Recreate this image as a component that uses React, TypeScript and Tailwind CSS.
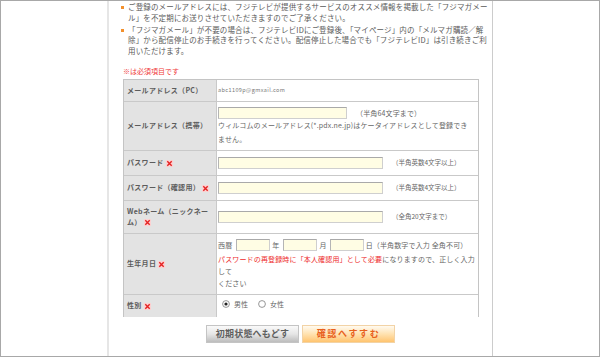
import React from 'react';

const Req = () => (
  <svg width="7" height="7" viewBox="0 0 7 7" className="inline-block ml-[2px] shrink-0">
    <rect width="7" height="7" fill="#fbd2d2" />
    <path d="M1.3 1.3L5.7 5.7M5.7 1.3L1.3 5.7" stroke="#e42222" strokeWidth="1.4" />
  </svg>
);

const Radio = ({ checked }: { checked?: boolean }) => (
  <svg width="8" height="8" viewBox="0 0 8 8" className="shrink-0">
    <circle cx="4" cy="4" r="3.4" fill="#fff" stroke="#8a8a8a" strokeWidth="0.9" />
    {checked && <circle cx="4" cy="4" r="1.6" fill="#222" />}
  </svg>
);

const Field = ({ className }: { className: string }) => (
  <input
    type="text"
    readOnly
    className={`h-[12px] bg-[#fffde4] border border-[#cfcfcf] border-t-[#a9a9a9] border-l-[#b5b5b5] outline-none ${className}`}
  />
);

interface RowProps {
  label: React.ReactNode;
  height: string;
  first?: boolean;
  children: React.ReactNode;
}

const Row = ({ label, height, first, children }: RowProps) => (
  <div className={`flex ${height} ${first ? '' : 'border-t border-[#c9c9c9]'}`}>
    <div className="w-[93px] shrink-0 bg-[#e3e3e3] border-r border-[#c9c9c9] flex items-center pl-[3px] text-[7px] leading-[11.5px] font-bold tracking-[0.3px] text-[#5c5c5c]">
      {label}
    </div>
    <div className="flex-1 pl-[1px] text-[7px] text-[#666]">{children}</div>
  </div>
);

export default function App() {
  return (
    <div className="w-[600px] h-[357px] border border-[#a8a8a8] bg-white flex overflow-hidden font-['Noto_Sans_CJK_JP','Noto_Sans',sans-serif]">
      <div className="w-[106px] shrink-0" />
      <div className="w-[386px] shrink-0 border-l-2 border-l-[#e6e6e6] border-r border-r-[#cccccc] flex flex-col">
        <ul className="pl-[12px] pt-[1px] text-[7.5px] leading-[10.5px] text-[#5a5a5a] tracking-[0.15px] whitespace-nowrap">
          <li className="flex">
            <span className="w-[3px] h-[3px] bg-[#f3902c] mt-[4px] mr-[4px] shrink-0" />
            <span>
              ご登録のメールアドレスには、フジテレビが提供するサービスのオススメ情報を掲載した「フジマガメー
              <br />
              ル」を不定期にお送りさせていただきますのでご了承ください。
            </span>
          </li>
          <li className="flex mt-[1.5px]">
            <span className="w-[3px] h-[3px] bg-[#f3902c] mt-[4px] mr-[4px] shrink-0" />
            <span>
              「フジマガメール」が不要の場合は、フジテレビIDにご登録後、「マイページ」内の「メルマガ購読／解
              <br />
              除」から配信停止のお手続きを行ってください。配信停止した場合でも「フジテレビID」は引き続きご利
              <br />
              用いただけます。
            </span>
          </li>
        </ul>

        <p className="mt-[10px] ml-[14px] text-[7px] leading-[10px] text-[#f03a3a]">※は必須項目です</p>

        <div className="mt-[3px] ml-[14px] w-[356px] border border-b-0 border-[#c4c4c4]">
          <Row first height="h-[21px]" label="メールアドレス（PC）">
            <div className="h-full flex items-center text-[5.5px] tracking-[0.4px] text-[#777]">abc1109p@gmxail.com</div>
          </Row>
          <Row height="h-[49px]" label="メールアドレス（携帯）">
            <div className="pt-[5px] leading-[14px] whitespace-nowrap tracking-[0.15px]">
              <div className="flex items-center h-[11px]">
                <Field className="w-[129px] h-[11px]" />
                <span className="ml-[9px]">（半角64文字まで）</span>
              </div>
              <div>ウィルコムのメールアドレス(*.pdx.ne.jp)はケータイアドレスとして登録でき</div>
              <div>ません。</div>
            </div>
          </Row>
          <Row
            height="h-[25px]"
            label={
              <>
                パスワード
                <Req />
              </>
            }
          >
            <div className="h-full flex items-center whitespace-nowrap">
              <Field className="w-[165px]" />
              <span className="ml-[9px] text-[6.5px]">（半角英数4文字以上）</span>
            </div>
          </Row>
          <Row
            height="h-[25px]"
            label={
              <>
                パスワード（確認用）
                <Req />
              </>
            }
          >
            <div className="h-full flex items-center whitespace-nowrap">
              <Field className="w-[165px]" />
              <span className="ml-[9px] text-[6.5px]">（半角英数4文字以上）</span>
            </div>
          </Row>
          <Row
            height="h-[33px]"
            label={
              <span className="whitespace-nowrap">
                Webネーム（ニックネー
                <br />
                <span className="inline-flex items-center">
                  ム）
                  <Req />
                </span>
              </span>
            }
          >
            <div className="h-full flex items-center whitespace-nowrap">
              <Field className="w-[165px]" />
              <span className="ml-[9px] text-[6.5px]">（全角20文字まで）</span>
            </div>
          </Row>
          <Row
            height="h-[61px]"
            label={
              <>
                生年月日
                <Req />
              </>
            }
          >
            <div className="pt-[5px] leading-[12px] whitespace-nowrap tracking-[0.15px]">
              <div className="flex items-center h-[12px]">
                <span>西暦</span>
                <Field className="w-[34px] ml-[4px]" />
                <span className="ml-[2px]">年</span>
                <Field className="w-[34px] ml-[4px]" />
                <span className="ml-[2px]">月</span>
                <Field className="w-[34px] ml-[3px]" />
                <span className="ml-[2px]">日（半角数字で入力 全角不可）</span>
              </div>
              <div className="mt-[2px]">
                <span className="text-[#ee2b2b]">パスワードの再登録時に「本人確認用」として必要</span>
                になりますので、正しく入力
              </div>
              <div>して</div>
              <div>ください</div>
            </div>
          </Row>
          <Row
            height="h-[23px]"
            label={
              <>
                性別
                <Req />
              </>
            }
          >
            <div className="h-full flex items-center pl-[4px] pb-[4px]">
              <Radio checked />
              <span className="ml-[4px]">男性</span>
              <span className="ml-[10px]">
                <Radio />
              </span>
              <span className="ml-[4px]">女性</span>
            </div>
          </Row>
        </div>

        <div className="mt-[8px] flex justify-center gap-[3px]">
          <button className="w-[93px] h-[18px] border border-[#c4c4c4] bg-gradient-to-b from-[#fafafa] via-[#e6e6e6] to-[#bdbdbd] text-[9px] font-bold tracking-[0.2px] text-[#5e5e5e] flex items-center justify-center">
            初期状態へもどす
          </button>
          <button className="w-[93px] h-[18px] border border-[#f2d3a6] bg-gradient-to-b from-[#fffaf0] via-[#ffe2b0] to-[#ffc46e] text-[9px] font-bold tracking-[1.6px] text-[#e8601c] flex items-center justify-center">
            確認へすすむ
          </button>
        </div>
      </div>
    </div>
  );
}
